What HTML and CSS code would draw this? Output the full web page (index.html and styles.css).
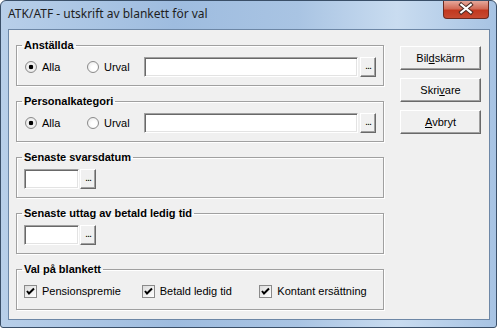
FILE: index.html
```html
<!DOCTYPE html>
<html lang="sv">
<head>
    <meta charset="UTF-8">
    <title>ATK/ATF - utskrift av blankett för val</title>
    <link rel="stylesheet" href="styles.css">
</head>
<body>
    <div class="window">
        <div class="titlebar">
            <span class="title">ATK/ATF - utskrift av blankett för val</span>
            <span class="close-btn">
                <svg width="46" height="18" viewBox="0 0 46 18">
                    <path d="M18 4.5 L28 12.5 M28 4.5 L18 12.5" stroke="#4a2a24" stroke-width="4.2" stroke-linecap="square" fill="none"/>
                    <path d="M18 4.5 L28 12.5 M28 4.5 L18 12.5" stroke="#ffffff" stroke-width="2.2" stroke-linecap="square" fill="none"/>
                </svg>
            </span>
        </div>
        <div class="client">
            <div class="groups">
                <fieldset class="group">
                    <legend>Anställda</legend>
                    <div class="row">
                        <label class="opt opt-alla"><span class="radio checked"></span>Alla</label>
                        <label class="opt opt-urval"><span class="radio"></span>Urval</label>
                        <span class="field wide"></span>
                        <span class="dots">...</span>
                    </div>
                </fieldset>
                <fieldset class="group">
                    <legend>Personalkategori</legend>
                    <div class="row">
                        <label class="opt opt-alla"><span class="radio checked"></span>Alla</label>
                        <label class="opt opt-urval"><span class="radio"></span>Urval</label>
                        <span class="field wide"></span>
                        <span class="dots">...</span>
                    </div>
                </fieldset>
                <fieldset class="group">
                    <legend>Senaste svarsdatum</legend>
                    <div class="row">
                        <span class="field date"></span>
                        <span class="dots tight">...</span>
                    </div>
                </fieldset>
                <fieldset class="group">
                    <legend>Senaste uttag av betald ledig tid</legend>
                    <div class="row">
                        <span class="field date"></span>
                        <span class="dots tight">...</span>
                    </div>
                </fieldset>
                <fieldset class="group">
                    <legend>Val på blankett</legend>
                    <div class="row">
                        <label class="opt opt-check"><span class="check"><svg width="11" height="11" viewBox="0 0 11 11"><path d="M2 5 L4 7.5 L9 2.5" stroke="#000" stroke-width="2" fill="none"/></svg></span>Pensionspremie</label>
                        <label class="opt opt-check"><span class="check"><svg width="11" height="11" viewBox="0 0 11 11"><path d="M2 5 L4 7.5 L9 2.5" stroke="#000" stroke-width="2" fill="none"/></svg></span>Betald ledig tid</label>
                        <label class="opt opt-check"><span class="check"><svg width="11" height="11" viewBox="0 0 11 11"><path d="M2 5 L4 7.5 L9 2.5" stroke="#000" stroke-width="2" fill="none"/></svg></span>Kontant ersättning</label>
                    </div>
                </fieldset>
            </div>
            <div class="buttons">
                <button class="btn">Bil<u>d</u>skärm</button>
                <button class="btn">Skri<u>v</u>are</button>
                <button class="btn"><u>A</u>vbryt</button>
            </div>
        </div>
    </div>
</body>
</html>
```

FILE: styles.css
```css
body {
    margin: 0;
    font-family: "Liberation Sans", Arial, sans-serif;
    font-size: 11px;
    color: #000;
}
.window {
    width: 497px;
    height: 328px;
    box-sizing: border-box;
    border: 1px solid #3a4f68;
    border-radius: 6px 6px 3px 3px;
    padding: 0 6px 7px 7px;
    background: linear-gradient(to right, #b8cfe9 0%, #9ebcdf 35%, #a9c4e3 60%, #c9dcf0 80%, #a7c3e3 100%);
    display: flex;
    flex-direction: column;
}
.titlebar {
    height: 28px;
    display: flex;
    justify-content: space-between;
    align-items: flex-start;
}
.title {
    font-family: "Noto Sans", "Liberation Sans", sans-serif;
    font-size: 12px;
    line-height: 16px;
    padding-top: 5px;
    color: #1e1e1e;
}
.close-btn {
    width: 46px;
    height: 18px;
    margin-right: 1px;
    box-sizing: border-box;
    border: 1px solid #6b2a20;
    border-top: none;
    border-radius: 0 0 4px 4px;
    background: linear-gradient(to bottom, #e6a89b 0%, #d26b57 45%, #c2381f 55%, #c74a31 100%);
    display: flex;
    align-items: center;
    justify-content: center;
}
.close-btn svg {
    display: block;
    margin-top: -1px;
}
.client {
    flex: 1;
    background: #f0f0f0;
    border: 1px solid #6d87a6;
    display: flex;
}
.groups {
    width: 368px;
    padding: 9px 0 0 7px;
}
.group {
    box-sizing: border-box;
    height: 47px;
    margin: 0 0 9px 0;
    padding: 5px 6px 0 7px;
    border: 1px solid #a0a0a0;
    box-shadow: inset 1px 1px 0 #fff, 1px 1px 0 #fff;
    min-width: 0;
}
.group legend {
    font-weight: bold;
    font-size: 11px;
    line-height: 13px;
    padding: 0 2px;
    margin-left: -2px;
}
.row {
    height: 20px;
    display: flex;
    align-items: center;
}
.opt {
    display: flex;
    align-items: center;
    white-space: nowrap;
}
.opt-alla {
    width: 62px;
    padding-left: 1px;
}
.opt-urval {
    width: 57px;
}
.opt-check {
    width: 120px;
}
.radio {
    width: 12px;
    height: 12px;
    box-sizing: border-box;
    border-radius: 50%;
    border: 1px solid #8a8a8a;
    background: radial-gradient(circle at 60% 60%, #ffffff 30%, #e4e4e4 100%);
    margin-right: 5px;
}
.radio.checked {
    background: radial-gradient(circle at 50% 50%, #000 0, #000 2px, #f4f4f4 2.6px, #dedede 100%);
}
.check {
    width: 13px;
    height: 13px;
    box-sizing: border-box;
    border: 1px solid #8a8a8a;
    background: linear-gradient(135deg, #dcdcdc, #ffffff);
    margin-right: 5px;
    display: flex;
    align-items: center;
    justify-content: center;
}
.check svg {
    display: block;
}
.field {
    height: 20px;
    box-sizing: border-box;
    background: #fff;
    border-top: 1px solid #a0a0a0;
    border-left: 1px solid #a0a0a0;
    border-right: 1px solid #fff;
    border-bottom: 1px solid #fff;
    box-shadow: inset 1px 1px 0 #696969, inset -1px -1px 0 #e3e3e3;
}
.field.wide {
    width: 214px;
}
.field.date {
    width: 55px;
}
.dots {
    width: 16px;
    height: 20px;
    box-sizing: border-box;
    margin-left: 2px;
    background: #f0f0f0;
    border-top: 1px solid #fff;
    border-left: 1px solid #fff;
    border-right: 1px solid #696969;
    border-bottom: 1px solid #696969;
    box-shadow: inset -1px -1px 0 #a0a0a0;
    font-size: 11px;
    line-height: 14px;
    text-align: center;
    letter-spacing: -1px;
}
.dots.tight {
    margin-left: 1px;
}
.buttons {
    margin-left: 16px;
    padding-top: 16px;
    display: flex;
    flex-direction: column;
    gap: 8px;
}
.btn {
    width: 81px;
    height: 24px;
    box-sizing: border-box;
    padding: 0;
    background: #f0f0f0;
    font-family: "Liberation Sans", Arial, sans-serif;
    font-size: 11px;
    color: #000;
    border-top: 1px solid #fff;
    border-left: 1px solid #fff;
    border-right: 1px solid #696969;
    border-bottom: 1px solid #696969;
    box-shadow: inset -1px -1px 0 #a0a0a0;
}
```
